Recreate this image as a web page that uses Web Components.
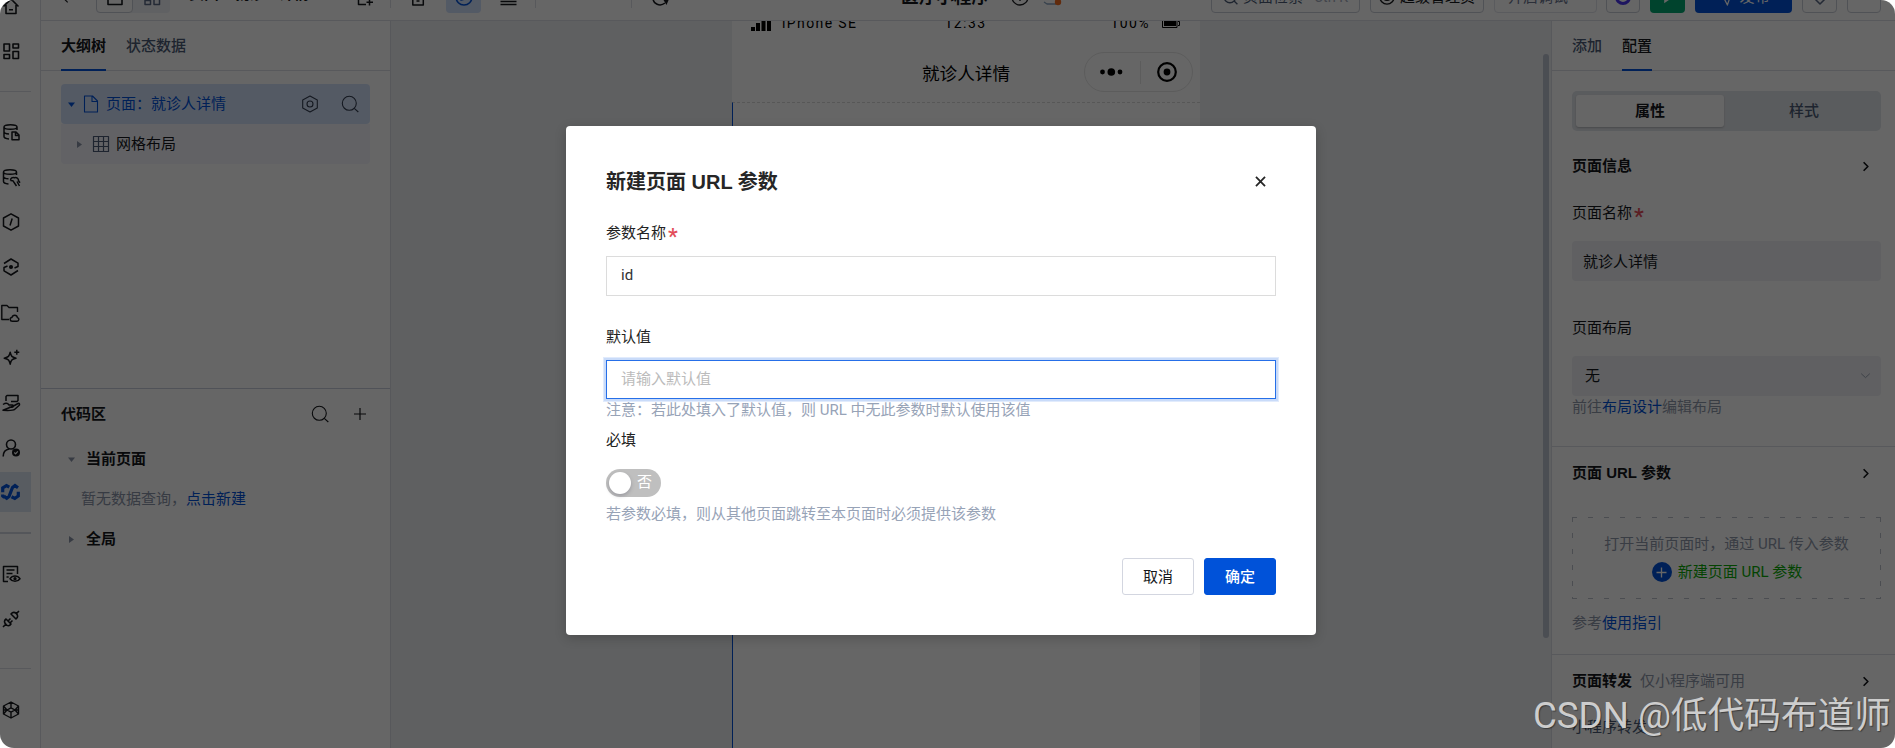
<!DOCTYPE html>
<html lang="zh-CN">
<head>
<meta charset="utf-8">
<title>页面编辑器</title>
<style>
html,body{margin:0;height:100%;background:#fff;overflow:hidden}
body{font:15px/22px Roboto,"Noto Sans CJK SC",sans-serif;color:#16181c}
</style>
</head>
<body>
<editor-app></editor-app>
<script>
const ICONS = {
  home:'<path d="M1.500 9.500 9 2l7.500 7.500M4 8v8.500h10V8M7 12.800h4"/>',
  grid:'<path d="M2 2h5.500v7H2zM11 2h5.500v4H11zM2 12.500h5.500v4H2zM11 9.500h5.500v7H11z"/>',
  db:'<path d="M15 7V4c0-3-13-3-13 0v9.500c0 1.200 2 2.200 5 2.400M2 4c0 3 13 3 13 0M2 8.500c0 1.400 2.500 2.400 5 2.500M10 9h4l3 3v4.700h-7zM13.500 9v3.500H17"/>',
  dbhand:'<path d="M14.500 7V4c0-3-13-3-13 0v9.500c0 1.200 2 2.200 5 2.400M1.500 4c0 3 13 3 13 0M1.500 8.500c0 1.400 2.500 2.200 5 2.300M8.500 12.500c0-2.500 2-3.500 4-2.700 2-.8 4.200.7 4 3l1.500 2M8.500 12.500l2.500.3 3.500 5.200M15 13.500l2.500 4.500"/>',
  hexslash:'<path d="M9 .8l7.500 4.200v8L9 17.200 1.500 13V5zM10.200 5.500 8 12.500"/>',
  hexdot:'<path d="M2 5.500 9 1l7 4.200v3.300l-3.500 1.500M16 12.500 9 17l-7-4.200V9.500L5.500 8"/><circle cx="9" cy="9" r="1.300" fill="currentColor"/>',
  folder:'<path d="M8 15.500H.8v-14H6l2 2h8.500V8M11.500 17.200c-3 0-3-3.700-.5-3.700.5-3 5-3 5.300 0 2.300.5 2 3.700-.3 3.700z"/>',
  spark:'<path d="M8.200 3.200c.8 4.200 1.700 5 5.800 6-4.100.9-5 1.800-5.800 6-.9-4.200-1.700-5.100-6-6 4.300-1 5.100-1.800 6-6zM14.800.8v5M12.300 3.300h5"/>',
  hand:'<path d="M4 7V2.500L5 1.500h11v5l-1 1H9M1 10.500c3-2 5-1 6 .5h3.500c1.500 0 1.200 2.200-.5 2.200H7M11.500 12l4.500-2.500c1.600-.5 2 1 1 2L12.500 15.500c-1 1-3 1.200-11.500.8z"/>',
  user:'<circle cx="9" cy="5.500" r="4.500"/><path d="M1.200 17.500c0-4.500 2.500-7 6-7.500"/><circle cx="14" cy="13.500" r="4" fill="currentColor" stroke="none"/><path stroke="#fff" stroke-width="1.200" d="m12.300 13.500 1.300 1.300 2.200-2.400"/>',
  flow:'<path stroke-width="3.200" stroke-linejoin="miter" d="M8.300 4.200 5.500 2.600 1.700 5v4.200M3.500 14.500 1.700 13v-1.500M3.200 13.400l2.500 1.800L8 13.500 11.500 4.500 14 2.600l3 2.200M10.500 13.800l3.300 1.600 3.500-2.400V8.800"/>',
  listeye:'<path d="M6 16.500H1.500v-15h14V9M4.500 5h8M4.500 8.500h6M4.500 12h2.200"/><path d="M8 13.700c2.500-3.700 7.500-3.700 10 0-2.500 3.500-7.500 3.500-10 0z"/><circle cx="13" cy="13.700" r=".9"/>',
  plug:'<path d="M1 17l2.800-2.800M17 1l-2.600 2.600M4 9l5 5c-1.500 2-3.500 2.400-5.200.2C2 12.500 2 10.500 4 9zM9 4l5 5c2-1.700 2.200-3.500.4-5.400C12.500 2 10.700 2 9 4zM6.500 10.500l2-2M8.500 12.500l2-2"/>',
  gem:'<path d="M9 1l7.500 4v8L9 17l-7.500-4V5zM9 1v6M9 11v6M1.500 5 5 9l-3.500 4M16.500 5 13 9l3.500 4M5 9l4-2.200L13 9l-4 2.200zM1.500 9H5M13 9h3.500"/>',
  page:'<path d="M2.500 1h8l5 5v11h-13zM10 1v5.500h5.500"/>',
  setting:'<path d="M9 1l7.300 4v8L9 17l-7.300-4V5z"/><circle cx="9" cy="9" r="3"/>',
  search:'<circle cx="8.300" cy="8.300" r="7"/><path d="m13.300 13.300 4 3.700"/>',
  plus:'<path d="M9 3v12M3 9h12"/>',
  table:'<path d="M1.500 1.500h15v15h-15zM1.500 6.500h15M1.500 11.500h15M6.500 1.500v15M11.500 1.500v15"/>',
  down:'<path stroke="none" fill="currentColor" d="M2 5h14L9 14z"/>',
  right:'<path stroke="none" fill="currentColor" d="M4 2v14l10-7z"/>',
  chevron:'<path d="m7 4.500 4.500 4.500L7 13.500"/>',
  vee:'<path d="m2 6 7 6.500L16 6"/>',
  close:'<path d="M4.200 4.200l9.600 9.600M13.800 4.200l-9.600 9.600"/>',
  back:'<path d="M12 3 6 9l6 6"/>',
  desktop:'<path d="M2 2h14v14.500H2z"/>',
  addpage:'<path d="M10 16.500H2.500v-15h13V8M13.500 11v6.500M10.500 14.200h6.500"/>',
  mobile:'<path d="M3.800 1h10.500v16H3.800zM7.500 13h3"/>',
  compass:'<circle cx="9" cy="9" r="8"/><path d="M6 12l2-5 4-1-2 5z"/>',
  lines:'<path d="M1 9h16M1 13.500h16M1 16.500h16"/>',
  redo:'<path d="M14 15c-5 4-12 1-12-5s8-10 13-5"/><path stroke="none" fill="currentColor" d="m12.500 12 5.500-1-2.500 6z"/>',
  help:'<circle cx="9" cy="9" r="8"/><path d="M9 10v3"/>',
  cloud:'<path stroke="#8aa4c0" d="M13 16H4l-3-2"/><circle cx="15" cy="14" r="3.200" fill="#f36c21" stroke="none"/>',
  admin:'<circle cx="9" cy="9" r="8"/><path d="M4.500 9c1 5 8 5 9 0z"/>',
  ring:'<circle cx="9" cy="9" r="6.500" stroke="#4b35f0" stroke-width="3"/>',
  play:'<path stroke="none" fill="#fff" d="M5 2l10 7-10 7z"/>',
  plane:'<path d="M2 8 16 2l-5 15-3-6z"/>',
  shield:'<path d="M1 3l8-2 8 2v5l-8 8-8-8z"/>'
};
const define = (tag, css, html, up) => customElements.define(tag, class extends HTMLElement {
  constructor(){
    super();
    const t = document.createElement('template');
    t.innerHTML = `<style>*{box-sizing:border-box}${css}</style>${html}`;
    this.attachShadow({mode:'open'}).append(t.content.cloneNode(true));
  }
  connectedCallback(){ if(up) up(this, this.shadowRoot); }
});

define('ui-icon',':host{display:block;flex:none;width:18px;height:18px}svg{display:block;width:100%;height:100%;overflow:visible;fill:none;stroke:currentColor;stroke-linejoin:round}','<svg viewBox="0 0 18 18"></svg>',(el,r)=>{
  const s=r.querySelector('svg'), z=el.getAttribute('size');
  s.innerHTML=ICONS[el.getAttribute('name')];
  s.setAttribute('stroke-width',el.getAttribute('weight')||'1.3');
  if(z) el.style.width=el.style.height=z+'px';
});

define('side-rail',`:host{display:flex;flex-direction:column;width:41px;height:748px;border-right:1px solid #dcdfe6;overflow:hidden;background:#fff}
.i{flex:none;height:45px;width:31px;display:flex;align-items:center;padding-left:2px}
.i.on{height:40px;margin:2px 0 3px;background:#dde5f2;color:#0052d9;padding-left:1px}
.l{flex:none;height:1px;width:31px;background:#dcdfe6}`,
`<div class="i" style="margin-top:-17px"><ui-icon name="home" weight="1.600"></ui-icon></div>
<div class="i"><ui-icon name="grid" weight="1.600"></ui-icon></div>
<div class="l" style="margin:18px 0 17px"></div>
<div class="i"><ui-icon name="db" weight="1.500"></ui-icon></div>
<div class="i"><ui-icon name="dbhand" weight="1.500"></ui-icon></div>
<div class="i"><ui-icon name="hexslash" weight="1.500"></ui-icon></div>
<div class="i"><ui-icon name="hexdot" weight="1.500"></ui-icon></div>
<div class="i" style="padding-left:1px;margin-top:1px"><ui-icon name="folder" weight="1.400"></ui-icon></div>
<div class="i"><ui-icon name="spark" weight="1.500"></ui-icon></div>
<div class="i"><ui-icon name="hand" weight="1.500"></ui-icon></div>
<div class="i"><ui-icon name="user" weight="1.600"></ui-icon></div>
<div class="i on"><ui-icon name="flow" size="18"></ui-icon></div>
<div class="l" style="height:2px;margin:17px 0 17px;background:#d3d7e0"></div>
<div class="i"><ui-icon name="listeye" weight="1.500"></ui-icon></div>
<div class="i"><ui-icon name="plug" weight="1.600"></ui-icon></div>
<div class="l" style="margin:27px 0 18px"></div>
<div class="i"><ui-icon name="gem" weight="1.400"></ui-icon></div>`);

define('bar-button',`:host{display:flex;flex:none;height:32px;align-items:center;justify-content:center;gap:5px;border:1px solid #c9cdd6;border-radius:4px;white-space:nowrap}`,'<slot></slot>');

define('top-bar',`:host{display:flex;align-items:flex-end;height:21px;overflow:hidden;border-bottom:1px solid #dcdfe6;background:#fff}
.row{display:flex;align-items:center;height:32px;margin-bottom:7px;flex:none;width:1854px}
.row>*{flex:none}
.seg{display:flex;width:74px;height:32px;background:#f0f2f7;border-radius:4px;align-items:center}
.seg bar-button{width:37px;background:#fff}.seg>ui-icon{margin-left:10px;color:#5b6a86}
.d{width:1px;height:22px;background:#dcdfe6}
b{white-space:nowrap}.g{color:#4b5b76}`,
`<div class="row">
<ui-icon name="back" size="16" style="margin-left:16px"></ui-icon>
<div class="seg" style="margin-left:23px"><bar-button><ui-icon name="desktop" weight="1.600"></ui-icon></bar-button><ui-icon name="grid" weight="1.500"></ui-icon></div>
<b style="margin:-6px 0 0 19px;width:121px">页面：就诊人详情</b>
<ui-icon name="addpage" weight="1.500" style="margin-left:46px"></ui-icon>
<i class="d" style="margin-left:16px"></i>
<ui-icon name="mobile" weight="1.500" style="margin-left:18px"></ui-icon>
<bar-button style="margin-left:19px;width:35px;background:#cfe0fc;border:0;color:#0052d9"><ui-icon name="compass" weight="1.500"></ui-icon></bar-button>
<ui-icon name="lines" weight="1.500" style="margin-left:18px;width:19px"></ui-icon>
<i class="d" style="margin-left:17px"></i>
<i class="d" style="margin-left:95px"></i>
<ui-icon name="redo" weight="1.500" style="margin-left:19px"></ui-icon>
<b style="margin-left:232px;width:91px;font-size:17.600px">医疗小程序</b>
<ui-icon name="help" weight="1.300" style="margin-left:19px"></ui-icon>
<ui-icon name="cloud" style="margin-left:13px;width:20px"></ui-icon>
<bar-button style="margin-left:149px;width:149px"><ui-icon name="search" size="15" weight="1.600" class="g"></ui-icon><span class="g">页面检索</span><span style="color:#a5adbd;margin-left:6px;font-size:14px">Ctrl K</span></bar-button>
<bar-button style="margin-left:10px;width:114px"><ui-icon name="admin" size="16" weight="1.600"></ui-icon>超级管理员</bar-button>
<bar-button style="margin-left:10px;width:103px;border-color:#e0e3ea;color:#6b7590;justify-content:flex-start;padding-left:13px">开启调试</bar-button>
<bar-button style="margin-left:9px;width:34px"><ui-icon name="ring"></ui-icon></bar-button>
<bar-button style="margin-left:10px;width:35px;background:#00a870;border:0"><ui-icon name="play" size="15"></ui-icon></bar-button>
<bar-button style="margin-left:10px;width:97px;background:#0052d9;border:0;color:#fff"><ui-icon name="plane" size="17"></ui-icon>发布</bar-button>
<bar-button style="margin-left:10px;width:35px;color:#5b6a86"><ui-icon name="shield" weight="1.500"></ui-icon></bar-button>
<bar-button style="margin-left:10px;width:34px"></bar-button>
</div>`);

define('tab-item',`:host{display:flex;align-items:center;height:50px;color:#4b5b76;border-bottom:2px solid transparent;padding-top:1px;margin-bottom:-1px;font-weight:500}:host([active]){color:#16181c;border-color:#0052d9;font-weight:700}:host([semi]){font-weight:500}`,'<slot></slot>');

define('outline-panel',`:host{display:flex;flex-direction:column;width:350px;border-right:1px solid #d9dce3;background:#fff}
.tabs{display:flex;gap:20px;padding-left:20px;height:50px;border-bottom:1px solid #dcdfe6}
.tree{margin:13px 20px 0;height:304px}
.r{display:flex;align-items:center;height:40px}
.a{background:#d3e2fb;border-radius:4px;color:#0052d9;padding-left:6px}
.b{background:#f4f6fd;border-radius:0 0 4px 4px;padding-left:14px;height:40px}
.grow{flex:1}.m{color:#8a94a8}
.code{border-top:1px solid #c9cddb;padding-left:20px}`,
`<div class="tabs"><tab-item active>大纲树</tab-item><tab-item>状态数据</tab-item></div>
<div class="tree">
<div class="r a"><ui-icon name="down" size="9"></ui-icon><ui-icon name="page" weight="1.100" style="margin-left:6px;"></ui-icon><span style="margin-left:6px">页面：就诊人详情</span><i class="grow"></i><ui-icon name="setting" weight="1.100" style="margin-right:22px;color:#333d50"></ui-icon><ui-icon name="search" weight="1.100" style="margin-right:11px;color:#333d50"></ui-icon></div>
<div class="r b"><ui-icon name="right" size="9" class="m"></ui-icon><ui-icon name="table" weight="1.200" style="margin-left:8px;color:#4b5b76"></ui-icon><span style="margin-left:6px">网格布局</span></div>
</div>
<div class="code">
<div class="r" style="height:50px;padding-bottom:1px"><b>代码区</b><i class="grow"></i><ui-icon name="search" weight="1.100" style="margin-right:22px"></ui-icon><ui-icon name="plus" weight="1.200" style="margin-right:21px"></ui-icon></div>
<div class="r" style="padding-left:6px"><ui-icon name="down" size="9" class="m"></ui-icon><b style="margin-left:10px">当前页面</b></div>
<div class="r" style="padding-left:20px"><span class="m">暂无数据查询，</span><span style="color:#0052d9">点击新建</span></div>
<div class="r" style="padding-left:6px"><ui-icon name="right" size="9" class="m"></ui-icon><b style="margin-left:10px">全局</b></div>
</div>`);

define('phone-preview',`:host{display:flex;flex-direction:column;width:468px;background:#fff;margin-left:341px}
.status{display:flex;align-items:center;height:20px;margin-top:-8px;padding:0 20px 0 19px;font-size:14px;letter-spacing:1.400px;color:#000}
.status>div{flex:1;display:flex;align-items:center}
.nav{display:grid;grid-template-columns:1fr auto 1fr;align-items:center;height:60px;margin-top:9px;font-size:17.600px;color:#000}
.nav span{padding-top:3px}
.cap{justify-self:end;margin-right:7px;width:109px;height:40px;border:1px solid #e6e6e6;border-radius:20px;display:flex;align-items:center;padding-left:15px}
.page{flex:1;border-left:1px solid #0052d9;border-top:1px dashed #dadada}
svg{display:block}`,
`<div class="status"><div><svg width="21" height="16" style="margin-right:10px"><path d="M0 12h4v4H0zM5 8h4v8H5zM10.500 4h4v12h-4zM16 0h4v16h-4z"/></svg>iPhone SE</div><span>12:33</span><div style="justify-content:flex-end">100%<svg width="18" height="9" style="margin-left:12px"><path fill="none" stroke="#000" d="M.5.500h14.500v8H.5zM16 2.500h1.500v4H16"/><path d="M2 2h12v5H2z"/></svg></div></div>
<div class="nav"><span></span><span>就诊人详情</span><div class="cap"><svg width="23" height="8"><circle cx="2.500" cy="4" r="2.400"/><circle cx="11.300" cy="4" r="3.800"/><circle cx="20" cy="4" r="2.400"/></svg><svg width="1" height="23" style="margin:0 16px 0 17px"><path fill="#e6e6e6" d="M0 0h1v23H0z"/></svg><svg width="20" height="20"><circle cx="10" cy="10" r="8.800" fill="none" stroke="#000" stroke-width="2.200"/><circle cx="10" cy="10" r="3.400"/></svg></div></div>
<div class="page"></div>`);

define('design-canvas',`:host{display:flex;width:1160px;background:#eef0f3;overflow:hidden;justify-content:flex-start}
.bar{width:6px;height:584px;border-radius:3px;background:#bcc2d0;margin:33px 2px 0 auto}`,
`<phone-preview></phone-preview><div class="bar"></div>`);

define('section-head',`:host{display:flex;align-items:center;height:22px;font-weight:700}i{flex:1}ui-icon{margin-right:7px}`,
`<slot></slot><slot name="note"></slot><i></i><ui-icon name="chevron" weight="1.800" size="17"></ui-icon>`);

define('field-label',`:host{display:flex;align-items:center;height:22px}:host([required])::after{content:"*";color:#e34d59;font:500 22px/22px Roboto;margin:8px 0 0 2px;height:22px}`,'<slot></slot>');

define('config-panel',`:host{display:flex;flex-direction:column;flex:1;border-left:1px solid #dcdfe6;background:#fff;overflow:hidden}
.tabs{display:flex;gap:20px;padding-left:20px;height:50px;border-bottom:1px solid #dcdfe6;flex:none}
.seg{display:flex;margin:20px 14px 0 20px;height:40px;padding:4px 0 4px 4px;background:#e2e5ea;border-radius:5px;flex:none}
.seg span{flex:1;display:flex;align-items:center;justify-content:center;color:#4b5b76;font-weight:500;padding-left:3px}
.seg .on{flex:none;width:148px;padding:0;background:#fff;color:#16181c;border-radius:3px;box-shadow:0 1px 2px #0003;font-weight:700}
.s{padding:0 14px 0 20px}.s+.s{border-top:1px solid #dcdfe6}
.in{display:flex;align-items:center;justify-content:space-between;height:40px;background:#eff1f4;border-radius:4px;padding:0 10px 0 11px}
.m{color:#8f98aa}.l{color:#0052d9}
.box{margin-top:33px;height:82px;display:flex;flex-direction:column;align-items:center;padding-top:16px;gap:6px;--c:#bcc1cb;
background:repeating-linear-gradient(90deg,var(--c) 0 5px,transparent 5px 16px) 0 0/100% 1px no-repeat,repeating-linear-gradient(90deg,var(--c) 0 5px,transparent 5px 16px) 0 100%/100% 1px no-repeat,repeating-linear-gradient(var(--c) 0 5px,transparent 5px 16px) 0 0/1px 100% no-repeat,repeating-linear-gradient(var(--c) 0 5px,transparent 5px 16px) 100% 0/1px 100% no-repeat}
.add{display:flex;align-items:center;gap:6px;color:#0bab06;padding-left:1px}
.dot{width:20px;height:20px;border-radius:50%;background:#0052d9;color:#fff;display:flex;align-items:center;justify-content:center}`,
`<div class="tabs"><tab-item>添加</tab-item><tab-item active semi>配置</tab-item></div>
<div class="seg"><span class="on">属性</span><span>样式</span></div>
<div class="s" style="height:315px;padding-top:24px;flex:none"><section-head>页面信息</section-head>
<field-label required style="margin-top:25px">页面名称</field-label>
<div class="in" style="margin-top:17px;padding-top:1px">就诊人详情</div>
<field-label style="margin-top:36px">页面布局</field-label>
<div class="in" style="margin-top:17px;padding:0 10px 1px 13px">无<ui-icon name="vee" size="11" weight="1.600" style="color:#9aa3b3"></ui-icon></div>
<div class="m">前往<span class="l">布局设计</span>编辑布局</div></div>
<div class="s" style="height:208px;padding-top:15px;flex:none"><section-head style="font-family:'Liberation Sans','Noto Sans CJK SC',sans-serif">页面 URL 参数</section-head>
<div class="box"><span class="m">打开当前页面时，通过 URL 传入参数</span><span class="add"><span class="dot"><ui-icon name="plus" size="15" weight="1.600"></ui-icon></span>新建页面 URL 参数</span></div>
<div style="margin-top:13px"><span class="m">参考</span><span class="l">使用指引</span></div></div>
<div class="s" style="padding-top:15px"><section-head>页面转发<span slot="note" style="color:#8f98aa;font-weight:400;margin-left:8px">仅小程序端可用</span></section-head>
<div style="margin-top:24px;color:#4b5b76">小程序转发</div></div>`);

define('text-field',`:host{display:flex;align-items:center;height:40px;border:1px solid #dcdcdc;padding:0 14px 2px;color:#333}:host([focused]){height:39px;border-color:#266fe8;box-shadow:0 0 0 2px #c9dbf9,0 0 0 3px #e1ebfc;color:#bbb}`,'<slot></slot>');

define('toggle-switch',`:host{display:flex;align-items:center;width:55px;height:28px;border-radius:14px;background:#bfbfbf;color:#fff;padding-left:3px;gap:6px}i{width:22px;height:22px;border-radius:50%;background:#fff;box-shadow:0 2px 4px #0023}span{margin-top:-3px}`,'<i></i><span><slot></slot></span>');

define('push-button',`:host{display:flex;align-items:center;justify-content:center;width:72px;height:37px;border:1px solid #d3d6e0;border-radius:3px;color:#16181c}:host([primary]){background:#0052d9;border-color:#0052d9;color:#fff;font-weight:500}`,'<slot></slot>');

define('param-dialog',`:host{position:absolute;left:566px;top:126px;width:750px;height:509px;background:#fff;border-radius:4px;padding:43px 40px 40px;display:flex;flex-direction:column;box-shadow:0 3px 12px #0003;color:#222;box-sizing:border-box}
header{display:flex;justify-content:space-between;align-items:center;height:24px;font:700 20px/24px "Liberation Sans","Noto Sans CJK SC",sans-serif;color:#262626}
header span{padding-top:1px}
.h{color:#97a3b7;height:22px;white-space:nowrap}
footer{display:flex;justify-content:flex-end;gap:10px;margin-top:33px}`,
`<header><span>新建页面 URL 参数</span><ui-icon name="close" size="17" weight="1.900" style="margin-right:7px"></ui-icon></header>
<field-label required style="margin-top:29px">参数名称</field-label>
<text-field style="margin-top:12px">id</text-field>
<field-label style="margin-top:30px">默认值</field-label>
<text-field focused style="margin-top:12px">请输入默认值</text-field>
<div class="h">注意：若此处填入了默认值，则 URL 中无此参数时默认使用该值</div>
<field-label style="margin-top:8px">必填</field-label>
<toggle-switch style="margin-top:18px">否</toggle-switch>
<div class="h" style="margin-top:6px">若参数必填，则从其他页面跳转至本页面时必须提供该参数</div>
<footer><push-button>取消</push-button><push-button primary>确定</push-button></footer>`);

define('water-mark',`:host{position:absolute;right:4px;bottom:5px;font:36.700px/54px Roboto,"Noto Sans CJK SC",sans-serif;color:#cdcdcd;text-shadow:1px 1px 1px #0006;white-space:nowrap}`,'<slot></slot>');

define('editor-app',`:host{display:flex;position:relative;width:1895px;height:748px;border-radius:14px;overflow:hidden;background:#fff}
.main{flex:1;display:flex;flex-direction:column;min-width:0}
.work{flex:1;display:flex;min-height:0}
.mask{position:absolute;inset:0;background:rgba(0,0,0,.6)}`,
`<side-rail></side-rail><div class="main"><top-bar></top-bar><div class="work"><outline-panel></outline-panel><design-canvas></design-canvas><config-panel></config-panel></div></div>
<div class="mask"></div><param-dialog></param-dialog><water-mark>CSDN @低代码布道师</water-mark>`);
</script>
</body>
</html>
